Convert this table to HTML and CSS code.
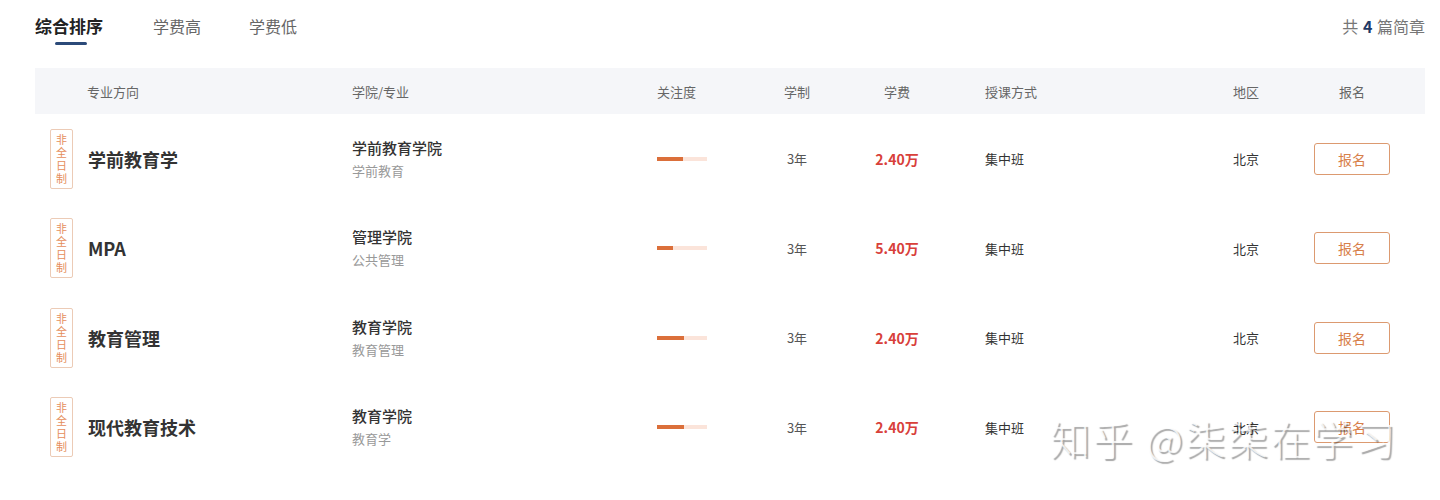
FILE: index.html
```html
<!DOCTYPE html>
<html lang="zh-CN">
<head>
<meta charset="utf-8">
<title>简章列表</title>
<link rel="stylesheet" href="styles.css">
</head>
<body>
<div class="page">
  <div class="topbar">
    <div class="tabs">
      <div class="tab active">综合排序</div>
      <div class="tab">学费高</div>
      <div class="tab">学费低</div>
    </div>
    <div class="count">共 <b>4</b> 篇简章</div>
  </div>

  <div class="table">
    <div class="row head">
      <div class="c c1">专业方向</div>
      <div class="c c2">学院/专业</div>
      <div class="c c3">关注度</div>
      <div class="c c4">学制</div>
      <div class="c c5">学费</div>
      <div class="c c6">授课方式</div>
      <div class="c c7">地区</div>
      <div class="c c8">报名</div>
    </div>

    <div class="row item">
      <div class="c c1"><span class="tag">非全日制</span><span class="major">学前教育学</span></div>
      <div class="c c2"><div class="college">学前教育学院</div><div class="sub">学前教育</div></div>
      <div class="c c3"><div class="bar"><div class="fill" style="width:26px"></div></div></div>
      <div class="c c4">3年</div>
      <div class="c c5 fee">2.40万</div>
      <div class="c c6">集中班</div>
      <div class="c c7">北京</div>
      <div class="c c8"><button class="btn">报名</button></div>
    </div>

    <div class="row item">
      <div class="c c1"><span class="tag">非全日制</span><span class="major">MPA</span></div>
      <div class="c c2"><div class="college">管理学院</div><div class="sub">公共管理</div></div>
      <div class="c c3"><div class="bar"><div class="fill" style="width:16px"></div></div></div>
      <div class="c c4">3年</div>
      <div class="c c5 fee">5.40万</div>
      <div class="c c6">集中班</div>
      <div class="c c7">北京</div>
      <div class="c c8"><button class="btn">报名</button></div>
    </div>

    <div class="row item">
      <div class="c c1"><span class="tag">非全日制</span><span class="major">教育管理</span></div>
      <div class="c c2"><div class="college">教育学院</div><div class="sub">教育管理</div></div>
      <div class="c c3"><div class="bar"><div class="fill" style="width:27px"></div></div></div>
      <div class="c c4">3年</div>
      <div class="c c5 fee">2.40万</div>
      <div class="c c6">集中班</div>
      <div class="c c7">北京</div>
      <div class="c c8"><button class="btn">报名</button></div>
    </div>

    <div class="row item">
      <div class="c c1"><span class="tag">非全日制</span><span class="major">现代教育技术</span></div>
      <div class="c c2"><div class="college">教育学院</div><div class="sub">教育学</div></div>
      <div class="c c3"><div class="bar"><div class="fill" style="width:27px"></div></div></div>
      <div class="c c4">3年</div>
      <div class="c c5 fee">2.40万</div>
      <div class="c c6">集中班</div>
      <div class="c c7">北京</div>
      <div class="c c8"><button class="btn">报名</button></div>
    </div>
  </div>

  <div class="watermark">知乎 @柒柒在学习</div>
</div>
</body>
</html>
```

FILE: styles.css
```css
* { box-sizing: border-box; }
html, body { margin: 0; padding: 0; background: #fff; }
body {
  font-family: "Noto Sans CJK SC", "Noto Sans", sans-serif;
  color: #333;
  width: 1440px;
  height: 500px;
  overflow: hidden;
}
.page {
  position: relative;
  padding: 0 15px 0 35px;
  height: 500px;
}
.topbar {
  display: flex;
  justify-content: space-between;
  align-items: flex-start;
  height: 68px;
}
.tabs {
  display: flex;
  gap: 48px;
  padding-top: 13px;
}
.tab {
  position: relative;
  font-size: 16px;
  line-height: 26px;
  color: #666;
}
.tab.active {
  font-size: 17px;
  font-weight: 700;
  color: #222;
  margin-right: 2px;
}
.tab.active::after {
  content: "";
  position: absolute;
  left: 20px;
  top: 29px;
  width: 32px;
  height: 3px;
  border-radius: 2px;
  background: #2b4a79;
}
.count {
  padding-top: 13px;
  font-size: 16px;
  line-height: 26px;
  color: #777;
}
.count b { color: #1f3a66; font-weight: 700; margin: 0 1px; }

.table { display: flex; flex-direction: column; }
.row {
  display: grid;
  grid-template-columns: 317px 305px 90px 100px 100px 286px 80px 78px 1fr;
  align-items: center;
}
.row.head {
  height: 46px;
  background: #f5f6f9;
  font-size: 13px;
  color: #666;
}
.row.head .c1 { padding-left: 52px; }
.row.item { height: 89.5px; font-size: 13px; color: #333; }
.row.item .c1 { padding-left: 15px; display: flex; align-items: center; gap: 15px; }
.c4, .c5, .c8 { text-align: center; }
.c6 { padding-left: 38px; }
.row.item .c4 { color: #555; }

.tag {
  width: 23px;
  height: 60px;
  border: 1px solid #eccbb6;
  border-radius: 2px;
  color: #e58e5c;
  font-size: 11px;
  line-height: 13px;
  display: flex;
  align-items: center;
  justify-content: center;
  text-align: center;
  padding: 0 5px;
  word-break: break-all;
}
.major {
  font-size: 18px;
  font-weight: 700;
  color: #333;
}
.college {
  font-size: 15px;
  line-height: 20px;
  font-weight: 500;
  color: #333;
}
.sub {
  margin-top: 4px;
  font-size: 13px;
  line-height: 18px;
  color: #999;
}
.bar {
  width: 50px;
  height: 4px;
  background: #fbe4da;
}
.fill { height: 4px; background: #db6f3a; }
.fee { color: #d8403a; font-weight: 700; font-size: 14px; }
.btn {
  width: 76px;
  height: 32px;
  border: 1px solid #dc9a70;
  border-radius: 3px;
  background: #fff;
  color: #d8804a;
  font-family: inherit;
  font-size: 14px;
  padding: 0;
  cursor: pointer;
}
.watermark {
  position: absolute;
  left: 1050px;
  top: 413px;
  font-size: 40px;
  line-height: 50px;
  font-weight: 300;
  letter-spacing: 2.5px;
  color: rgba(255, 255, 255, 0.8);
  text-shadow: 2px 2px 1px rgba(0, 0, 0, 0.35);
  white-space: nowrap;
  pointer-events: none;
}
```
